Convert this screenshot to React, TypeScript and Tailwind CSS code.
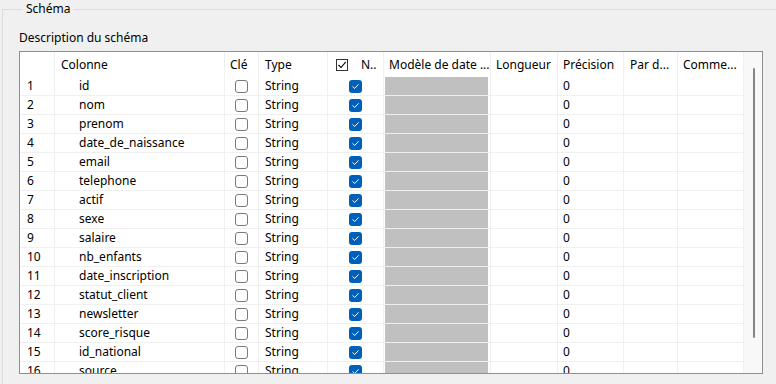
import React from "react";

const rows = [
  "id",
  "nom",
  "prenom",
  "date_de_naissance",
  "email",
  "telephone",
  "actif",
  "sexe",
  "salaire",
  "nb_enfants",
  "date_inscription",
  "statut_client",
  "newsletter",
  "score_risque",
  "id_national",
  "source",
];

const cell = "h-full shrink-0 border-r border-[#f0f0f0] flex items-center";

function Unchecked() {
  return <div className="w-[13px] h-[13px] rounded-[3px] border border-[#7a7a7a] bg-[#fdfdfd]" />;
}

function Checked() {
  return (
    <div className="w-[13px] h-[13px] rounded-[3px] bg-[#005fb8] flex items-center justify-center">
      <svg width="9" height="9" viewBox="0 0 9 9" fill="none">
        <path d="M1.8 4.7 L3.7 6.5 L7.3 2.6" stroke="white" strokeWidth="1" strokeLinecap="round" strokeLinejoin="round" />
      </svg>
    </div>
  );
}

export default function App() {
  return (
    <div
      className="w-[776px] h-[384px] bg-[#f0f0f0] overflow-hidden text-[12px] text-black"
      style={{ fontFamily: '"Noto Sans", "Segoe UI", sans-serif' }}
    >
      <fieldset className="ml-[2px] mt-[2px] border-l border-t border-[#dcdcdc] h-[420px] pl-[16px]">
        <legend className="ml-[4px] px-[3px] leading-[14px]">Schéma</legend>

        <div className="mt-[15px] leading-[14px]">Description du schéma</div>

        {/* ── table ── */}
        <div className="mt-[6px] w-[744px] h-[323px] border border-[#8f8f8f] bg-white flex overflow-hidden">
          <div className="w-[724px] shrink-0 flex flex-col">
            {/* header */}
            <div className="h-[25px] shrink-0 flex">
              <div className={`${cell} w-[35px] border-[#e5e5e5]`} />
              <div className={`${cell} w-[170px] pl-[6px] border-[#e5e5e5]`}>Colonne</div>
              <div className={`${cell} w-[34px] pl-[5px] border-[#e5e5e5]`}>Clé</div>
              <div className={`${cell} w-[69px] pl-[6px] border-[#e5e5e5]`}>Type</div>
              <div className={`${cell} w-[56px] pl-[8px] gap-[13px] border-[#e5e5e5]`}>
                <div className="w-[12px] h-[12px] border border-[#333] flex items-center justify-center">
                  <svg width="10" height="10" viewBox="0 0 10 10" fill="none">
                    <path d="M1.5 5 L4 7.5 L8.8 1.8" stroke="black" strokeWidth="1.1" />
                  </svg>
                </div>
                <span>N..</span>
              </div>
              <div className={`${cell} w-[107px] pl-[5px] border-[#e5e5e5] whitespace-nowrap overflow-hidden`}>Modèle de date ...</div>
              <div className={`${cell} w-[67px] pl-[5px] border-[#e5e5e5]`}>Longueur</div>
              <div className={`${cell} w-[66px] pl-[5px] border-[#e5e5e5]`}>Précision</div>
              <div className={`${cell} w-[54px] pl-[6px] border-[#e5e5e5]`}>Par d...</div>
              <div className={`${cell} w-[66px] pl-[5px] border-[#e5e5e5]`}>Comme...</div>
            </div>

            {/* rows */}
            {rows.map((name, i) => (
              <div key={name} className="h-[19px] shrink-0 flex border-b border-[#f0f0f0]">
                <div className={`${cell} w-[35px] pl-[7px]`}>{i + 1}</div>
                <div className={`${cell} w-[170px] pl-[24px]`}>{name}</div>
                <div className={`${cell} w-[34px] justify-center`}>
                  <Unchecked />
                </div>
                <div className={`${cell} w-[69px] pl-[6px]`}>String</div>
                <div className={`${cell} w-[56px] justify-center`}>
                  <Checked />
                </div>
                <div className={`${cell} w-[107px] pl-px pr-[2px]`}>
                  <div className="w-full h-full bg-[#c0c0c0]" />
                </div>
                <div className={`${cell} w-[67px]`} />
                <div className={`${cell} w-[66px] pl-[5px]`}>0</div>
                <div className={`${cell} w-[54px]`} />
                <div className={`${cell} w-[66px]`} />
              </div>
            ))}
          </div>

          {/* scrollbar */}
          <div className="w-[18px] shrink-0 bg-[#f8f8f8] pt-[16px] flex justify-center">
            <div className="w-[2px] h-[270px] rounded-full bg-[#858585] ml-px" />
          </div>
        </div>
      </fieldset>
    </div>
  );
}
